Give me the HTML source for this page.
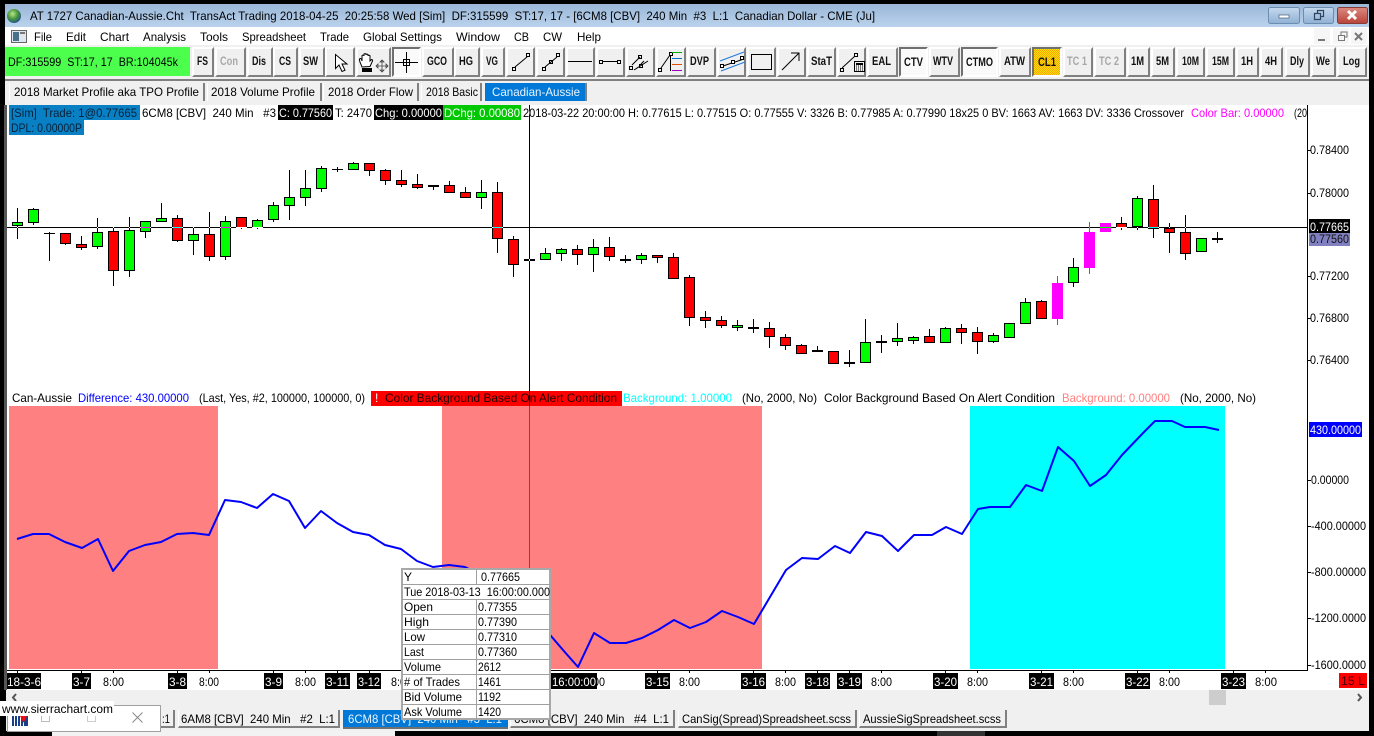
<!DOCTYPE html>
<html><head><meta charset="utf-8"><title>Sierra Chart</title>
<style>
html,body{margin:0;padding:0;background:#000;width:1374px;height:736px;overflow:hidden}
div{position:absolute;box-sizing:border-box}
.b{top:47px;height:30px;background:#f0f0f0;border:2px solid;border-color:#fff #808080 #808080 #fff}
.p{background:#fafafa;border-color:#707070 #fff #fff #707070}
.t{top:83px;height:18px;background:#f0f0f0;border-left:1px solid #fff;border-right:2px solid #808080}
.u{top:710px;height:18px;background:#f0f0f0;border-left:1px solid #fff;border-right:2px solid #808080;border-bottom:2px solid #808080}
svg{position:absolute;left:0;top:0}
text{font:12px "Liberation Sans",sans-serif;fill:#000;white-space:pre}
.w{font:bold 12px "Liberation Sans",sans-serif;fill:#111}
.g{font:bold 12px "Liberation Sans",sans-serif;fill:#a8a8a8}
</style></head><body>
<div style="left:5px;top:4px;width:1364px;height:23px;background:linear-gradient(#9ab7d8,#bad2ec)"></div>
<div style="left:5px;top:27px;width:1364px;height:18px;background:#fff"></div>
<div style="left:5px;top:45px;width:1364px;height:34px;background:#f0f0f0"></div>
<div style="left:5px;top:79px;width:1364px;height:2px;background:#808080"></div>
<div style="left:5px;top:81px;width:1364px;height:24px;background:#f0f0f0"></div>
<div style="left:6px;top:690px;width:1363px;height:41px;background:#f0f0f0"></div>
<div style="left:4px;top:105px;width:3px;height:585px;background:#555"></div>
<div style="left:52px;top:731px;width:343px;height:5px;background:#f2f2f2"></div>
<div style="left:937px;top:731px;width:48px;height:5px;background:#333"></div>
<div style="left:5px;top:47px;width:185px;height:29px;background:#4dff4d"></div>

<div class="b" style="left:192px;width:22px"></div><div class="b" style="left:215px;width:31px"></div><div class="b" style="left:247px;width:26px"></div><div class="b" style="left:273px;width:25px"></div><div class="b" style="left:299px;width:26px"></div><div class="b" style="left:325px;width:30px"></div><div class="b" style="left:356px;width:35px"></div><div class="b p" style="left:392px;width:29px"></div><div class="b" style="left:422px;width:32px"></div><div class="b" style="left:454px;width:26px"></div><div class="b" style="left:481px;width:24px"></div><div class="b" style="left:506px;width:29px"></div><div class="b" style="left:536px;width:29px"></div><div class="b" style="left:566px;width:29px"></div><div class="b" style="left:596px;width:29px"></div><div class="b" style="left:626px;width:29px"></div><div class="b" style="left:656px;width:30px"></div><div class="b" style="left:687px;width:29px"></div><div class="b" style="left:717px;width:29px"></div><div class="b" style="left:747px;width:29px"></div><div class="b" style="left:777px;width:29px"></div><div class="b" style="left:807px;width:29px"></div><div class="b" style="left:837px;width:29px"></div><div class="b" style="left:867px;width:31px"></div><div class="b p" style="left:899px;width:29px"></div><div class="b" style="left:929px;width:31px"></div><div class="b p" style="left:961px;width:37px"></div><div class="b" style="left:999px;width:32px"></div><div class="b p" style="left:1032px;width:30px;background:#fdc70c"></div><div class="b" style="left:1063px;width:30px"></div><div class="b" style="left:1094px;width:32px"></div><div class="b" style="left:1127px;width:23px"></div><div class="b" style="left:1151px;width:24px"></div><div class="b" style="left:1176px;width:29px"></div><div class="b" style="left:1206px;width:29px"></div><div class="b" style="left:1236px;width:23px"></div><div class="b" style="left:1260px;width:23px"></div><div class="b" style="left:1285px;width:25px"></div><div class="b" style="left:1311px;width:25px"></div><div class="b" style="left:1337px;width:30px"></div>

<div class="t" style="left:9px;width:196px"></div><div class="t" style="left:207px;width:115px"></div><div class="t" style="left:323px;width:96px"></div><div class="t" style="left:421px;width:61px"></div>
<div style="left:485px;top:83px;width:102px;height:18px;background:#0078d7;border-right:2px solid #808080"></div>

<div class="u" style="left:20px;width:155px"></div><div class="u" style="left:178px;width:162px"></div>
<div style="left:343px;top:710px;width:165px;height:19px;background:#0078d7;border-bottom:2px solid #707070"></div>
<div class="u" style="left:510px;width:165px"></div><div class="u" style="left:678px;width:179px"></div><div class="u" style="left:859px;width:148px"></div>

<svg width="1374" height="736" viewBox="0 0 1374 736">
<defs>
<radialGradient id="gl" cx=".4" cy=".35" r=".7"><stop offset="0" stop-color="#b5e88a"/><stop offset=".5" stop-color="#4c9a3c"/><stop offset="1" stop-color="#1d4f90"/></radialGradient>
<linearGradient id="wb" x1="0" y1="0" x2="0" y2="1"><stop offset="0" stop-color="#c5d9ee"/><stop offset="1" stop-color="#8fb0d4"/></linearGradient>
<linearGradient id="wc" x1="0" y1="0" x2="0" y2="1"><stop offset="0" stop-color="#dc8a80"/><stop offset="1" stop-color="#b8433a"/></linearGradient>
<pattern id="ck" width="2" height="2" patternUnits="userSpaceOnUse"><rect width="2" height="2" fill="#ffe000"/><rect width="1" height="1" fill="#f5a800"/><rect x="1" y="1" width="1" height="1" fill="#f5a800"/></pattern>
</defs>

<!-- title -->
<circle cx="14" cy="16" r="7" fill="url(#gl)"/>
<text x="30" y="20" textLength="845" lengthAdjust="spacingAndGlyphs">AT 1727 Canadian-Aussie.Cht  TransAct Trading 2018-04-25  20:25:58 Wed [Sim]  DF:315599  ST:17, 17 - [6CM8 [CBV]  240 Min  #3  L:1  Canadian Dollar - CME (Ju]</text>
<rect x="1268.5" y="7.5" width="31" height="16" rx="2" fill="url(#wb)" stroke="#6d8db0"/>
<rect x="1303.5" y="7.5" width="30" height="16" rx="2" fill="url(#wb)" stroke="#6d8db0"/>
<rect x="1337.5" y="7.5" width="30" height="16" rx="2" fill="url(#wc)" stroke="#8a3a34"/>
<rect x="1279" y="15" width="10" height="3" fill="#fff" stroke="#45607e" stroke-width=".7"/>
<path d="M1314.5 13.5h6v6h-6zM1317.5 13.5v-3h6v6h-3" fill="none" stroke="#2f4460" stroke-width="1.2"/>
<path d="M1348 11l8 8M1356 11l-8 8" stroke="#fff" stroke-width="3"/>

<!-- menu -->
<rect x="11.5" y="30.5" width="15" height="12" fill="#dfe6ee" stroke="#666"/><rect x="13" y="32" width="6" height="9" fill="#4a6f8a"/><rect x="20" y="32" width="5" height="2" fill="#777"/>
<text x="34" y="41" textLength="18" lengthAdjust="spacingAndGlyphs">File</text>
<text x="66" y="41" textLength="20" lengthAdjust="spacingAndGlyphs">Edit</text>
<text x="100" y="41" textLength="29" lengthAdjust="spacingAndGlyphs">Chart</text>
<text x="143" y="41" textLength="43" lengthAdjust="spacingAndGlyphs">Analysis</text>
<text x="200" y="41" textLength="28" lengthAdjust="spacingAndGlyphs">Tools</text>
<text x="242" y="41" textLength="64" lengthAdjust="spacingAndGlyphs">Spreadsheet</text>
<text x="320" y="41" textLength="29" lengthAdjust="spacingAndGlyphs">Trade</text>
<text x="363" y="41" textLength="79" lengthAdjust="spacingAndGlyphs">Global Settings</text>
<text x="456" y="41" textLength="44" lengthAdjust="spacingAndGlyphs">Window</text>
<text x="514" y="41" textLength="15" lengthAdjust="spacingAndGlyphs">CB</text>
<text x="543" y="41" textLength="19" lengthAdjust="spacingAndGlyphs">CW</text>
<text x="577" y="41" textLength="24" lengthAdjust="spacingAndGlyphs">Help</text>
<g shape-rendering="crispEdges"><rect x="1314" y="28" width="16" height="16" fill="#f6f6f6"/><rect x="1333" y="28" width="16" height="16" fill="#f6f6f6"/><rect x="1351" y="28" width="16" height="16" fill="#f6f6f6"/><rect x="1318" y="39" width="7" height="2" fill="#777"/></g>
<path d="M1338.5 35.5h6v5h-6zM1341 35v-3h6v5h-2" fill="none" stroke="#777"/>
<path d="M1355 33l7 7M1362 33l-7 7" stroke="#777" stroke-width="2"/>

<!-- toolbar -->
<text x="8" y="66" textLength="170" lengthAdjust="spacingAndGlyphs">DF:315599  ST:17, 17  BR:104045k</text>
<text class="w" x="197" y="65" textLength="11" lengthAdjust="spacingAndGlyphs">FS</text>
<text class="g" x="220" y="65" textLength="18" lengthAdjust="spacingAndGlyphs">Con</text>
<text class="w" x="252" y="65" textLength="14" lengthAdjust="spacingAndGlyphs">Dis</text>
<text class="w" x="279" y="65" textLength="12" lengthAdjust="spacingAndGlyphs">CS</text>
<text class="w" x="303" y="65" textLength="15" lengthAdjust="spacingAndGlyphs">SW</text>
<text class="w" x="427" y="65" textLength="20" lengthAdjust="spacingAndGlyphs">GCO</text>
<text class="w" x="459" y="65" textLength="14" lengthAdjust="spacingAndGlyphs">HG</text>
<text class="w" x="486" y="65" textLength="12" lengthAdjust="spacingAndGlyphs">VG</text>
<text class="w" x="690" y="65" textLength="19" lengthAdjust="spacingAndGlyphs">DVP</text>
<text class="w" x="811" y="65" textLength="21" lengthAdjust="spacingAndGlyphs">StaT</text>
<text class="w" x="872" y="65" textLength="19" lengthAdjust="spacingAndGlyphs">EAL</text>
<text class="w" x="904" y="66" textLength="19" lengthAdjust="spacingAndGlyphs">CTV</text>
<text class="w" x="933" y="65" textLength="20" lengthAdjust="spacingAndGlyphs">WTV</text>
<text class="w" x="966" y="66" textLength="27" lengthAdjust="spacingAndGlyphs">CTMO</text>
<text class="w" x="1004" y="65" textLength="21" lengthAdjust="spacingAndGlyphs">ATW</text>
<rect x="1034" y="49" width="26" height="26" fill="url(#ck)"/>
<text class="w" x="1038" y="66" textLength="18" lengthAdjust="spacingAndGlyphs">CL1</text>
<text class="g" x="1067" y="65" textLength="20" lengthAdjust="spacingAndGlyphs">TC 1</text>
<text class="g" x="1099" y="65" textLength="20" lengthAdjust="spacingAndGlyphs">TC 2</text>
<text class="w" x="1131" y="65" textLength="13" lengthAdjust="spacingAndGlyphs">1M</text>
<text class="w" x="1156" y="65" textLength="13" lengthAdjust="spacingAndGlyphs">5M</text>
<text class="w" x="1182" y="65" textLength="17" lengthAdjust="spacingAndGlyphs">10M</text>
<text class="w" x="1212" y="65" textLength="17" lengthAdjust="spacingAndGlyphs">15M</text>
<text class="w" x="1241" y="65" textLength="12" lengthAdjust="spacingAndGlyphs">1H</text>
<text class="w" x="1265" y="65" textLength="12" lengthAdjust="spacingAndGlyphs">4H</text>
<text class="w" x="1290" y="65" textLength="14" lengthAdjust="spacingAndGlyphs">Dly</text>
<text class="w" x="1316" y="65" textLength="14" lengthAdjust="spacingAndGlyphs">We</text>
<text class="w" x="1343" y="65" textLength="17" lengthAdjust="spacingAndGlyphs">Log</text>

<!-- toolbar icons -->
<path d="M335.5 54.5v14l3.5-3.5 3 6.5 3-1.3-3-6.2h5z" fill="#fff" stroke="#000"/>
<path d="M362 67c-1-3-3-6-2.500-8 .5-1 1.500-.5 2 .5l.5 1.500V56c0-1.200 2-1.200 2 0v-1.500c0-1.200 2-1.200 2 0v.5c0-1.200 2-1.200 2 0v1c0-1 2-1 2 0v5l1-1c1-1 2 0 1.500 1l-2.500 5.500z" fill="#fff" stroke="#000"/>
<rect x="362" y="68" width="10" height="4" fill="#000"/>
<path d="M376 66h12M382 60v12M376 66l2-2v4zM388 66l-2-2v4zM382 60l-2 2h4zM382 72l-2-2h4z" fill="#fff" stroke="#444" stroke-width=".8"/>
<g shape-rendering="crispEdges" fill="none" stroke="#000">
<path d="M395 62.500h23M406.500 52v21"/><rect x="403.500" y="59.500" width="6" height="6"/>
<rect x="512.500" y="67.500" width="3" height="3"/><rect x="526.500" y="53.500" width="3" height="3"/>
<rect x="542.500" y="67.500" width="3" height="3"/><rect x="556.500" y="53.500" width="3" height="3"/><rect x="549.500" y="60.500" width="3" height="3"/>
<path d="M568 61.500h24M602 61.500h16"/><rect x="599.500" y="60.500" width="3" height="3"/><rect x="617.500" y="60.500" width="3" height="3"/>
<rect x="629.500" y="66.500" width="3" height="3"/><rect x="639.500" y="64.500" width="3" height="3"/><rect x="638.500" y="55.500" width="3" height="3"/>
<rect x="658.500" y="68.500" width="3" height="3"/><rect x="669.500" y="52.500" width="3" height="3"/>
<path d="M670.500 55v16"/>
<rect x="751.500" y="54.500" width="20" height="15"/>
<rect x="840.500" y="68.500" width="3" height="3"/><rect x="854.500" y="53.500" width="3" height="3"/>
<rect x="854.500" y="61.500" width="10" height="10"/>
</g>
<g shape-rendering="crispEdges"><rect x="856" y="63" width="7" height="2" fill="#000"/><path d="M856 66h7M856 68h7M856 70h7" stroke="#000" stroke-dasharray="1 1"/>
<path d="M672 52.500h10" stroke="#00b000"/><path d="M672 58.500h10" stroke="#0070d0"/><path d="M672 64.500h10" stroke="#e05000"/><path d="M672 70.500h10" stroke="#a000c0"/></g>
<path d="M515 67l12-10M545 67l12-10M632 65l8-8M634 70l14-9M641 64l3-3M661 68l9-13M782 70l17-17M791 53h8v8M842 68l13-12" fill="none" stroke="#000"/>
<path d="M720 61l24-9M721 71l24-9" stroke="#1f78d8" fill="none"/>
<path d="M723 66l21-7" stroke="#000"/>
<rect x="720.500" y="64.500" width="3" height="3" fill="#fff" stroke="#000"/><rect x="731.500" y="60.500" width="3" height="3" fill="#fff" stroke="#000"/><rect x="740.500" y="56.500" width="3" height="3" fill="#fff" stroke="#000"/>

<!-- top tabs -->
<text x="14" y="96" textLength="185" lengthAdjust="spacingAndGlyphs">2018 Market Profile aka TPO Profile</text>
<text x="211" y="96" textLength="104" lengthAdjust="spacingAndGlyphs">2018 Volume Profile</text>
<text x="328" y="96" textLength="85" lengthAdjust="spacingAndGlyphs">2018 Order Flow</text>
<text x="426" y="96" textLength="52" lengthAdjust="spacingAndGlyphs">2018 Basic</text>
<text x="492" y="96" textLength="88" lengthAdjust="spacingAndGlyphs" style="fill:#e8f4ff">Canadian-Aussie</text>

<!-- chart bg -->
<rect x="7" y="105" width="1362" height="585" fill="#fff"/>
<g shape-rendering="crispEdges">
<rect x="9" y="406" width="209" height="263" fill="#ff8080"/>
<rect x="442" y="406" width="320" height="263" fill="#ff8080"/>
<rect x="970" y="406" width="255" height="263" fill="#00ffff"/>
<rect x="7" y="670" width="1300" height="1" fill="#000"/>
<rect x="1307" y="105" width="1" height="566" fill="#000"/>
<path d="M1308 150.500h3M1308 193.500h3M1308 276.500h3M1308 318.500h3M1308 360.500h3M1308 480.500h3M1308 526.500h3M1308 572.500h3M1308 618.500h3M1308 665.500h3" stroke="#000"/>
<path d="M17.500 671v2M81.500 671v2M113.500 671v2M177.500 671v2M209.500 671v2M273.500 671v2M305.500 671v2M337.500 671v2M369.500 671v2M401.500 671v2M657.500 671v2M689.500 671v2M753.500 671v2M785.500 671v2M817.500 671v2M849.500 671v2M881.500 671v2M945.500 671v2M977.500 671v2M1041.500 671v2M1073.500 671v2M1137.500 671v2M1169.500 671v2M1233.500 671v2M1265.500 671v2" stroke="#000"/>

<!-- candles -->
<path stroke="#000" fill="none" d="M17.500 208V239M33.500 208V225M49.500 232V261M65.500 233V245M81.500 236V250M97.500 218V249M113.500 227V286M129.500 217V277M145.500 221V238M161.500 203V222M177.500 215V242M193.500 227V255M209.500 212V261M225.500 216V260M241.500 217V229M257.500 219V229M273.500 202V222M289.500 170V220M305.500 170V206M321.500 166V192M337.500 167V172M353.500 162V170M369.500 163V176M385.500 169V185M401.500 170V187M417.500 174V189M433.500 185V190M449.500 181V193M465.500 187V198M481.500 180V209M497.500 182V253M513.500 236V277M545.500 248V260M561.500 248V261M577.500 245V265M593.500 239V272M609.500 237V261M625.500 255V263M641.500 253V264M657.500 255V263M673.500 253V279M689.500 275V326M705.500 311V328M721.500 316V328M737.500 320V331M753.500 319V333M769.500 322V348M785.500 334V350M801.500 344V354M817.500 346V352M833.500 351V364M849.500 350V367M865.500 319V363M881.500 335V353M897.500 323V346M913.500 336V344M929.500 329V343M945.500 327V343M961.500 324V344M977.500 327V354M993.500 333V343M1009.500 323V338M1025.500 298V324M1041.500 300V319M1073.500 258V287M1121.500 217V230M1137.500 196V230M1153.500 185V238M1169.500 223V253M1185.500 215V260M1201.500 238V252M1217.500 232V243"/>
<path stroke="#ff00ff" fill="none" d="M1057.500 276V325M1089.500 222V274"/>
<path fill="#0f0" stroke="#000" d="M12.500 222.500h10v3h-10zM28.500 209.500h10v13h-10zM92.500 232.500h10v14h-10zM124.500 230.500h10v40h-10zM140.500 221.500h10v10h-10zM156.500 218.500h10v3h-10zM188.500 234.500h10v6h-10zM220.500 221.500h10v35h-10zM252.500 220.500h10v7h-10zM268.500 205.500h10v14h-10zM284.500 197.500h10v8h-10zM300.500 188.500h10v9h-10zM316.500 168.500h10v20h-10zM348.500 163.500h10v6h-10zM476.500 192.500h10v5h-10zM540.500 253.500h10v6h-10zM556.500 249.500h10v4h-10zM588.500 247.500h10v7h-10zM636.500 255.500h10v4h-10zM732.500 325.500h10v2h-10zM860.500 342.500h10v20h-10zM892.500 338.500h10v3h-10zM908.500 337.500h10v3h-10zM940.500 328.500h10v14h-10zM988.500 335.500h10v6h-10zM1004.500 323.500h10v14h-10zM1020.500 302.500h10v21h-10zM1068.500 267.500h10v15h-10zM1132.500 198.500h10v28h-10zM1196.500 238.500h10v13h-10z"/>
<path fill="#f00" stroke="#000" d="M60.500 233.500h10v10h-10zM76.500 244.500h10v3h-10zM108.500 231.500h10v39h-10zM172.500 218.500h10v22h-10zM204.500 234.500h10v22h-10zM236.500 217.500h10v10h-10zM364.500 163.500h10v7h-10zM380.500 170.500h10v10h-10zM396.500 180.500h10v4h-10zM412.500 184.500h10v3h-10zM444.500 185.500h10v7h-10zM460.500 192.500h10v5h-10zM492.500 192.500h10v46h-10zM508.500 239.500h10v25h-10zM572.500 249.500h10v5h-10zM604.500 247.500h10v9h-10zM652.500 255.500h10v2h-10zM668.500 257.500h10v21h-10zM684.500 277.500h10v40h-10zM700.500 317.500h10v3h-10zM716.500 320.500h10v5h-10zM764.500 328.500h10v8h-10zM780.500 337.500h10v8h-10zM796.500 345.500h10v8h-10zM828.500 351.500h10v12h-10zM924.500 336.500h10v6h-10zM956.500 328.500h10v4h-10zM972.500 332.500h10v9h-10zM1036.500 301.500h10v17h-10zM1116.500 223.500h10v4h-10zM1148.500 199.500h10v29h-10zM1164.500 228.500h10v4h-10zM1180.500 232.500h10v21h-10z"/>
<path fill="#f0f" stroke="#f0f" d="M1052.500 283.500h10v35h-10zM1084.500 232.500h10v35h-10zM1100.500 223.500h10v8h-10z"/>
<path fill="#000" d="M44 233h11v1h-11zM332 169h11v1h-11zM428 185h11v2h-11zM524 259h11v2h-11zM620 259h11v2h-11zM748 327h11v2h-11zM812 350h11v2h-11zM844 362h11v2h-11zM876 341h11v2h-11zM1212 238h11v2h-11z"/>
</g>

<!-- blue line -->
<polyline fill="none" stroke="#0000ff" stroke-width="2" stroke-linejoin="round" points="17,539 33,534 49,534 65,542 82,548 98,539 113,571 129,551 145,545 161,542 177,534 193,533 209,535 225,500 241,502 257,508 273,494 289,501 305,528 321,511 337,523 353,532 369,535 385,545 401,549 417,561 433,567 449,565 465,567 481,575 513,600 545,630 551,636 563,650 578,667 594,633 610,643 626,643 642,638 658,630 674,620 690,628 706,622 722,611 738,617 754,624 770,597 786,570 802,558 818,559 835,546 850,553 866,532 882,536 898,551 914,535 932,535 946,527 962,534 978,509 990,507 1010,507 1026,485 1042,491 1058,447 1074,461 1090,486 1106,475 1122,455 1144,432 1155,421 1172,421 1185,427 1205,427 1219,430"/>

<!-- upper legend -->
<g shape-rendering="crispEdges">
<rect x="9" y="105" width="131" height="15" fill="#0a80c4"/>
<rect x="9" y="120" width="75" height="15" fill="#0a80c4"/>
<rect x="278" y="105" width="55" height="15" fill="#000"/>
<rect x="374" y="105" width="69" height="15" fill="#000"/>
<rect x="443" y="105" width="78" height="15" fill="#00c800"/>
</g>
<text x="11" y="117" textLength="126" lengthAdjust="spacingAndGlyphs" style="fill:#06213a">[Sim]  Trade: 1@0.77665</text>
<text x="11" y="132" textLength="71" lengthAdjust="spacingAndGlyphs" style="fill:#06213a">DPL: 0.00000P</text>
<text x="142" y="117" textLength="134" lengthAdjust="spacingAndGlyphs">6CM8 [CBV]  240 Min   #3</text>
<text x="279" y="117" textLength="53" lengthAdjust="spacingAndGlyphs" style="fill:#fff">C: 0.77560</text>
<text x="335" y="117" textLength="37" lengthAdjust="spacingAndGlyphs">T: 2470</text>
<text x="375" y="117" textLength="67" lengthAdjust="spacingAndGlyphs" style="fill:#fff">Chg: 0.00000</text>
<text x="444" y="117" textLength="76" lengthAdjust="spacingAndGlyphs" style="fill:#fff">DChg: 0.00080</text>
<text x="523" y="117" textLength="661" lengthAdjust="spacingAndGlyphs">2018-03-22 20:00:00 H: 0.77615 L: 0.77515 O: 0.77555 V: 3326 B: 0.77985 A: 0.77990 18x25 0 BV: 1663 AV: 1663 DV: 3336 Crossover</text>
<text x="1191" y="117" textLength="93" lengthAdjust="spacingAndGlyphs" style="fill:#ff00ff">Color Bar: 0.00000</text>
<text x="1294" y="117" textLength="13" lengthAdjust="spacingAndGlyphs">(20</text>

<!-- crosshair -->
<g shape-rendering="crispEdges">
<rect x="7" y="227" width="1300" height="1" fill="#fff" style="mix-blend-mode:difference"/>
<rect x="529" y="105" width="1" height="122" fill="#fff" style="mix-blend-mode:difference"/>
<rect x="529" y="228" width="1" height="163" fill="#fff" style="mix-blend-mode:difference"/>
</g>

<!-- lower legend -->
<text x="12" y="402" textLength="60" lengthAdjust="spacingAndGlyphs">Can-Aussie</text>
<text x="78" y="402" textLength="111" lengthAdjust="spacingAndGlyphs" style="fill:#0000ff">Difference: 430.00000</text>
<text x="199" y="402" textLength="166" lengthAdjust="spacingAndGlyphs">(Last, Yes, #2, 100000, 100000, 0)</text>
<rect x="371" y="391" width="251" height="15" fill="#ff0000" shape-rendering="crispEdges"/>
<text x="375" y="402" style="fill:#fff">!</text>
<text x="385" y="402" textLength="232" lengthAdjust="spacingAndGlyphs" style="fill:#200">Color Background Based On Alert Condition</text>
<text x="623" y="402" textLength="109" lengthAdjust="spacingAndGlyphs" style="fill:#00ffff">Background: 1.00000</text>
<text x="742" y="402" textLength="75" lengthAdjust="spacingAndGlyphs">(No, 2000, No)</text>
<text x="824" y="402" textLength="231" lengthAdjust="spacingAndGlyphs">Color Background Based On Alert Condition</text>
<text x="1062" y="402" textLength="108" lengthAdjust="spacingAndGlyphs" style="fill:#ff8080">Background: 0.00000</text>
<text x="1180" y="402" textLength="76" lengthAdjust="spacingAndGlyphs">(No, 2000, No)</text>
<rect x="529" y="391" width="1" height="15" fill="#200000" shape-rendering="crispEdges"/>
<rect x="529" y="406" width="1" height="265" fill="#007f7f" shape-rendering="crispEdges"/>

<!-- price axis -->
<text x="1310" y="154" textLength="39" lengthAdjust="spacingAndGlyphs">0.78400</text>
<text x="1310" y="197" textLength="39" lengthAdjust="spacingAndGlyphs">0.78000</text>
<text x="1310" y="280" textLength="39" lengthAdjust="spacingAndGlyphs">0.77200</text>
<text x="1310" y="322" textLength="39" lengthAdjust="spacingAndGlyphs">0.76800</text>
<text x="1310" y="364" textLength="39" lengthAdjust="spacingAndGlyphs">0.76400</text>
<rect x="1309" y="231" width="41" height="15" fill="#8080c0" shape-rendering="crispEdges"/>
<text x="1310" y="243" textLength="39" lengthAdjust="spacingAndGlyphs" style="fill:#111">0.77560</text>
<rect x="1309" y="219" width="41" height="14" fill="#000" shape-rendering="crispEdges"/>
<text x="1310" y="231" textLength="39" lengthAdjust="spacingAndGlyphs" style="fill:#fff">0.77665</text>

<rect x="1309" y="422" width="53" height="15" fill="#0000ff" shape-rendering="crispEdges"/>
<text x="1310" y="434" textLength="51" lengthAdjust="spacingAndGlyphs" style="fill:#fff">430.00000</text>
<text x="1311" y="484" textLength="38" lengthAdjust="spacingAndGlyphs">0.00000</text>
<text x="1311" y="530" textLength="55" lengthAdjust="spacingAndGlyphs">-400.00000</text>
<text x="1311" y="576" textLength="55" lengthAdjust="spacingAndGlyphs">-800.00000</text>
<text x="1311" y="622" textLength="55" lengthAdjust="spacingAndGlyphs">-1200.0000</text>
<text x="1311" y="669" textLength="55" lengthAdjust="spacingAndGlyphs">-1600.0000</text>

<!-- time axis -->
<g shape-rendering="crispEdges" fill="#000">
<rect x="7" y="673" width="34" height="16"/><rect x="72" y="673" width="19" height="16"/><rect x="168" y="673" width="19" height="16"/><rect x="264" y="673" width="19" height="16"/><rect x="325" y="673" width="25" height="16"/><rect x="357" y="673" width="24" height="16"/><rect x="551" y="673" width="46" height="16"/><rect x="645" y="673" width="25" height="16"/><rect x="741" y="673" width="25" height="16"/><rect x="805" y="673" width="25" height="16"/><rect x="837" y="673" width="25" height="16"/><rect x="933" y="673" width="25" height="16"/><rect x="1029" y="673" width="25" height="16"/><rect x="1125" y="673" width="25" height="16"/><rect x="1221" y="673" width="25" height="16"/>
<rect x="1339" y="673" width="28" height="15" fill="#ff0000"/>
</g>
<text x="7" y="686" textLength="34" lengthAdjust="spacingAndGlyphs" style="fill:#fff">18-3-6</text>
<text x="73" y="686" textLength="17" lengthAdjust="spacingAndGlyphs" style="fill:#fff">3-7</text>
<text x="169" y="686" textLength="17" lengthAdjust="spacingAndGlyphs" style="fill:#fff">3-8</text>
<text x="265" y="686" textLength="17" lengthAdjust="spacingAndGlyphs" style="fill:#fff">3-9</text>
<text x="326" y="686" textLength="23" lengthAdjust="spacingAndGlyphs" style="fill:#fff">3-11</text>
<text x="358" y="686" textLength="22" lengthAdjust="spacingAndGlyphs" style="fill:#fff">3-12</text>
<text x="646" y="686" textLength="23" lengthAdjust="spacingAndGlyphs" style="fill:#fff">3-15</text>
<text x="742" y="686" textLength="23" lengthAdjust="spacingAndGlyphs" style="fill:#fff">3-16</text>
<text x="806" y="686" textLength="23" lengthAdjust="spacingAndGlyphs" style="fill:#fff">3-18</text>
<text x="838" y="686" textLength="23" lengthAdjust="spacingAndGlyphs" style="fill:#fff">3-19</text>
<text x="934" y="686" textLength="23" lengthAdjust="spacingAndGlyphs" style="fill:#fff">3-20</text>
<text x="1030" y="686" textLength="23" lengthAdjust="spacingAndGlyphs" style="fill:#fff">3-21</text>
<text x="1126" y="686" textLength="23" lengthAdjust="spacingAndGlyphs" style="fill:#fff">3-22</text>
<text x="1222" y="686" textLength="23" lengthAdjust="spacingAndGlyphs" style="fill:#fff">3-23</text>
<text x="103" y="686" textLength="21" lengthAdjust="spacingAndGlyphs">8:00</text>
<text x="199" y="686" textLength="20" lengthAdjust="spacingAndGlyphs">8:00</text>
<text x="295" y="686" textLength="21" lengthAdjust="spacingAndGlyphs">8:00</text>
<text x="391" y="686" textLength="21" lengthAdjust="spacingAndGlyphs">8:00</text>
<text x="584" y="686" textLength="21" lengthAdjust="spacingAndGlyphs">8:00</text>
<rect x="551" y="673" width="46" height="16" fill="#000" shape-rendering="crispEdges"/>
<text x="552" y="686" textLength="44" lengthAdjust="spacingAndGlyphs" style="fill:#fff">16:00:00</text>
<text x="679" y="686" textLength="21" lengthAdjust="spacingAndGlyphs">8:00</text>
<text x="775" y="686" textLength="21" lengthAdjust="spacingAndGlyphs">8:00</text>
<text x="871" y="686" textLength="21" lengthAdjust="spacingAndGlyphs">8:00</text>
<text x="967" y="686" textLength="21" lengthAdjust="spacingAndGlyphs">8:00</text>
<text x="1063" y="686" textLength="21" lengthAdjust="spacingAndGlyphs">8:00</text>
<text x="1159" y="686" textLength="21" lengthAdjust="spacingAndGlyphs">8:00</text>
<text x="1255" y="686" textLength="22" lengthAdjust="spacingAndGlyphs">8:00</text>
<text x="1341" y="685" textLength="24" lengthAdjust="spacingAndGlyphs" style="fill:#400">15 L</text>

<!-- scrollbar -->
<rect x="6" y="690" width="1363" height="16" fill="#f0f0f0"/>
<rect x="1209" y="690" width="17" height="15" fill="#cdcdcd"/>
<path d="M16 694l-3 3.500 3 3.500" fill="none" stroke="#555" stroke-width="2"/>
<path d="M1358 694l3 3.500-3 3.500" fill="none" stroke="#555" stroke-width="2"/>

<!-- bottom tabs -->
<text x="162" y="723" textLength="8" lengthAdjust="spacingAndGlyphs">:1</text>
<text x="181" y="723" textLength="154" lengthAdjust="spacingAndGlyphs">6AM8 [CBV]  240 Min   #2  L:1</text>
<text x="348" y="723" textLength="154" lengthAdjust="spacingAndGlyphs" style="fill:#e8f4ff">6CM8 [CBV]  240 Min   #3  L:1</text>
<text x="514" y="723" textLength="155" lengthAdjust="spacingAndGlyphs">6CM8 [CBV]  240 Min   #4  L:1</text>
<text x="682" y="723" textLength="169" lengthAdjust="spacingAndGlyphs">CanSig(Spread)Spreadsheet.scss</text>
<text x="863" y="723" textLength="138" lengthAdjust="spacingAndGlyphs">AussieSigSpreadsheet.scss</text>

<!-- taskbar preview -->
<rect x="7.500" y="705.500" width="153" height="26" fill="#fff" stroke="#a0a0a0"/>
<g shape-rendering="crispEdges">
<rect x="12" y="716" width="16" height="10" fill="#1a3f8a"/>
<path d="M14.500 716v10M17.500 716v10M20.500 716v10M23.500 716v10" stroke="#fff"/>
<path d="M20 716h7l-3.500 7z" fill="#e81010"/>
<path d="M41.500 714.500h8v7h-8z" fill="none" stroke="#bbb"/>
<path d="M87.500 714.500h8v7h-8z" fill="none" stroke="#ccc"/>
</g>
<path d="M132.500 712.500l10 10M142.500 712.500l-10 10" stroke="#888"/>
<rect x="0" y="701" width="114" height="15" fill="#fff"/>
<text x="2" y="713" textLength="111" lengthAdjust="spacingAndGlyphs">www.sierrachart.com</text>

<!-- tooltip -->
<rect x="402" y="569" width="148" height="150" fill="#fff" stroke="#a8a8a8" stroke-width="2" shape-rendering="crispEdges"/>
<g shape-rendering="crispEdges" stroke="#a0a0a0">
<path d="M402 584.500h148M402 599.500h148M402 614.500h148M402 629.500h148M402 644.500h148M402 659.500h148M402 674.500h148M402 689.500h148M402 704.500h148" fill="none"/>
<path d="M476.500 569v15M476.500 600v119" fill="none"/>
</g>
<text x="404" y="581">Y</text><text x="481" y="581" textLength="39" lengthAdjust="spacingAndGlyphs">0.77665</text>
<text x="404" y="596" textLength="146" lengthAdjust="spacingAndGlyphs">Tue 2018-03-13  16:00:00.000</text>
<text x="404" y="611" textLength="29" lengthAdjust="spacingAndGlyphs">Open</text><text x="478" y="611" textLength="39" lengthAdjust="spacingAndGlyphs">0.77355</text>
<text x="404" y="626" textLength="25" lengthAdjust="spacingAndGlyphs">High</text><text x="478" y="626" textLength="39" lengthAdjust="spacingAndGlyphs">0.77390</text>
<text x="404" y="641" textLength="21" lengthAdjust="spacingAndGlyphs">Low</text><text x="478" y="641" textLength="39" lengthAdjust="spacingAndGlyphs">0.77310</text>
<text x="404" y="656" textLength="20" lengthAdjust="spacingAndGlyphs">Last</text><text x="478" y="656" textLength="39" lengthAdjust="spacingAndGlyphs">0.77360</text>
<text x="404" y="671" textLength="37" lengthAdjust="spacingAndGlyphs">Volume</text><text x="478" y="671" textLength="23" lengthAdjust="spacingAndGlyphs">2612</text>
<text x="404" y="686" textLength="56" lengthAdjust="spacingAndGlyphs"># of Trades</text><text x="478" y="686" textLength="23" lengthAdjust="spacingAndGlyphs">1461</text>
<text x="404" y="701" textLength="58" lengthAdjust="spacingAndGlyphs">Bid Volume</text><text x="478" y="701" textLength="23" lengthAdjust="spacingAndGlyphs">1192</text>
<text x="404" y="716" textLength="58" lengthAdjust="spacingAndGlyphs">Ask Volume</text><text x="478" y="716" textLength="23" lengthAdjust="spacingAndGlyphs">1420</text>
</svg>
</body></html>
